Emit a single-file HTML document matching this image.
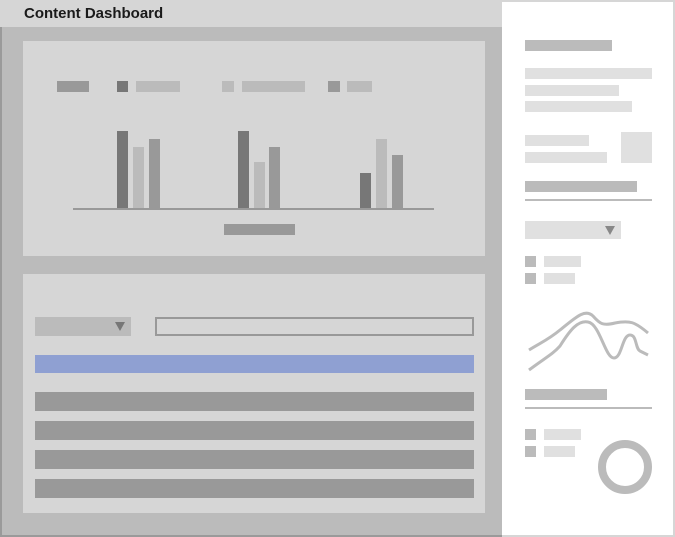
<!DOCTYPE html>
<html><head><style>
body{margin:0;width:675px;height:537px;position:relative;background:#d6d6d6;overflow:hidden;font-family:"Liberation Sans",sans-serif}
div{position:absolute}
</style></head><body>
<div style="left:24px;top:4px;font-size:15px;font-weight:bold;color:#1a1a1a;line-height:20px">Content Dashboard</div>
<div style="left:0;top:27px;width:502px;height:508px;background:#bbb;border-left:2px solid #9a9a9a;box-sizing:border-box"></div>
<div style="left:0;top:535px;width:502px;height:2px;background:#9a9a9a"></div>
<div style="left:23px;top:41px;width:462px;height:215px;background:#d6d6d6"></div>
<div style="left:23px;top:274px;width:462px;height:239px;background:#d6d6d6"></div>
<div style="left:57px;top:81px;width:32px;height:11px;background:#999"></div>
<div style="left:117px;top:81px;width:11px;height:11px;background:#777"></div>
<div style="left:136px;top:81px;width:44px;height:11px;background:#bbb"></div>
<div style="left:222px;top:81px;width:12px;height:11px;background:#bbb"></div>
<div style="left:242px;top:81px;width:63px;height:11px;background:#bbb"></div>
<div style="left:328px;top:81px;width:12px;height:11px;background:#999"></div>
<div style="left:347px;top:81px;width:25px;height:11px;background:#bbb"></div>
<div style="left:117px;top:131px;width:11px;height:78px;background:#777"></div>
<div style="left:133px;top:147px;width:11px;height:62px;background:#bbb"></div>
<div style="left:149px;top:139px;width:11px;height:70px;background:#999"></div>
<div style="left:238px;top:131px;width:11px;height:78px;background:#777"></div>
<div style="left:254px;top:162px;width:11px;height:47px;background:#bbb"></div>
<div style="left:269px;top:147px;width:11px;height:62px;background:#999"></div>
<div style="left:360px;top:173px;width:11px;height:36px;background:#777"></div>
<div style="left:376px;top:139px;width:11px;height:70px;background:#bbb"></div>
<div style="left:392px;top:155px;width:11px;height:54px;background:#999"></div>
<div style="left:73px;top:208px;width:361px;height:2px;background:#999"></div>
<div style="left:224px;top:224px;width:71px;height:11px;background:#999"></div>
<div style="left:35px;top:317px;width:96px;height:19px;background:#bbb"></div>
<div style="left:115px;top:322px;width:0;height:0;border-left:5px solid transparent;border-right:5px solid transparent;border-top:9px solid #777"></div>
<div style="left:155px;top:317px;width:319px;height:19px;border:2px solid #999;box-sizing:border-box"></div>
<div style="left:35px;top:355px;width:439px;height:18px;background:#8fa0d2"></div>
<div style="left:35px;top:392px;width:439px;height:19px;background:#999"></div>
<div style="left:35px;top:421px;width:439px;height:19px;background:#999"></div>
<div style="left:35px;top:450px;width:439px;height:19px;background:#999"></div>
<div style="left:35px;top:479px;width:439px;height:19px;background:#999"></div>
<div style="left:502px;top:0;width:173px;height:537px;background:#fff;border:2px solid #d6d6d6;border-left:none;box-sizing:border-box"></div>
<div style="left:525px;top:40px;width:87px;height:11px;background:#bbb"></div>
<div style="left:525px;top:68px;width:127px;height:11px;background:#e0e0e0"></div>
<div style="left:525px;top:85px;width:94px;height:11px;background:#e0e0e0"></div>
<div style="left:525px;top:101px;width:107px;height:11px;background:#e0e0e0"></div>
<div style="left:525px;top:135px;width:64px;height:11px;background:#e0e0e0"></div>
<div style="left:525px;top:152px;width:82px;height:11px;background:#e0e0e0"></div>
<div style="left:621px;top:132px;width:31px;height:31px;background:#e0e0e0"></div>
<div style="left:525px;top:181px;width:112px;height:11px;background:#bbb"></div>
<div style="left:525px;top:199px;width:127px;height:2px;background:#bbb"></div>
<div style="left:525px;top:221px;width:96px;height:18px;background:#e0e0e0"></div>
<div style="left:605px;top:226px;width:0;height:0;border-left:5px solid transparent;border-right:5px solid transparent;border-top:9px solid #888"></div>
<div style="left:525px;top:256px;width:11px;height:11px;background:#bbb"></div>
<div style="left:544px;top:256px;width:37px;height:11px;background:#e0e0e0"></div>
<div style="left:525px;top:273px;width:11px;height:11px;background:#bbb"></div>
<div style="left:544px;top:273px;width:31px;height:11px;background:#e0e0e0"></div>
<svg style="position:absolute;left:0;top:0" width="675" height="537">
<path d="M529 350 C540 343 548 340 560 330 C575 318 585 308 593 316 C600 324 603 326 615 323 C630 320 635 322 648 333" fill="none" stroke="#bbb" stroke-width="3"/>
<path d="M529 370 C545 358 553 354 560 346 C570 330 578 320 588 322 C600 324 605 358 614 358 C622 358 622 335 630 335 C637 335 635 348 640 351 L648 355" fill="none" stroke="#bbb" stroke-width="3"/>
<circle cx="625" cy="467" r="23" fill="none" stroke="#bbb" stroke-width="8"/>
</svg>
<div style="left:525px;top:389px;width:82px;height:11px;background:#bbb"></div>
<div style="left:525px;top:407px;width:127px;height:2px;background:#bbb"></div>
<div style="left:525px;top:429px;width:11px;height:11px;background:#bbb"></div>
<div style="left:544px;top:429px;width:37px;height:11px;background:#e0e0e0"></div>
<div style="left:525px;top:446px;width:11px;height:11px;background:#bbb"></div>
<div style="left:544px;top:446px;width:31px;height:11px;background:#e0e0e0"></div>
</body></html>
